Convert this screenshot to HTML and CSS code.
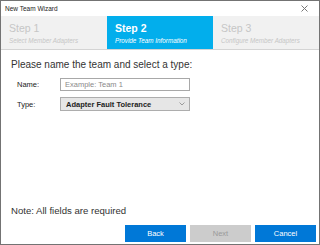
FILE: index.html
```html
<!DOCTYPE html>
<html lang="en">
<head>
    <meta charset="UTF-8">
    <meta name="viewport" content="width=device-width, initial-scale=1.0">
    <title>New Team Wizard</title>
    <link rel="stylesheet" href="styles.css">
</head>
<body>
    <div class="window">
        <div class="titlebar">
            <span class="title">New Team Wizard</span>
            <svg class="close" width="7" height="7" viewBox="0 0 7 7">
                <path d="M0.5 0.5 L6.5 6.5 M6.5 0.5 L0.5 6.5" stroke="#777" stroke-width="1" fill="none"/>
            </svg>
        </div>

        <div class="steps">
            <div class="step">
                <div class="step-name">Step 1</div>
                <div class="step-desc">Select Member Adapters</div>
            </div>
            <div class="step active">
                <div class="step-name">Step 2</div>
                <div class="step-desc">Provide Team Information</div>
            </div>
            <div class="step">
                <div class="step-name">Step 3</div>
                <div class="step-desc">Configure Member Adapters</div>
            </div>
        </div>

        <div class="content">
            <p class="heading">Please name the team and select a type:</p>
            <div class="form">
                <label for="team-name">Name:</label>
                <input type="text" id="team-name" class="input-field" placeholder="Example: Team 1">

                <label for="team-type">Type:</label>
                <div class="select">
                    <span>Adapter Fault Tolerance</span>
                    <svg width="6" height="4" viewBox="0 0 6 4">
                        <path d="M0.5 0.5 L3 3 L5.5 0.5" stroke="#888" stroke-width="0.8" fill="none"/>
                    </svg>
                </div>
            </div>

            <p class="note">Note: All fields are required</p>
        </div>

        <div class="footer">
            <button class="button">Back</button>
            <button class="button disabled">Next</button>
            <button class="button">Cancel</button>
        </div>
    </div>
</body>
</html>
```

FILE: styles.css
```css
* {
    box-sizing: border-box;
}
body {
    margin: 0;
    font-family: "Liberation Sans", Arial, sans-serif;
    background-color: white;
}
.window {
    width: 320px;
    height: 245px;
    border: 1px solid #737373;
    display: flex;
    flex-direction: column;
    background-color: white;
}
.titlebar {
    height: 15px;
    display: flex;
    align-items: center;
    justify-content: space-between;
    padding: 0 11px 0 4px;
}
.title {
    font-size: 6.5px;
    color: #222;
}
.steps {
    height: 34px;
    display: grid;
    grid-template-columns: 106px 106px 106px;
    background-color: #f1f1f1;
    border-bottom: 1px solid #d4d4d4;
}
.step {
    padding: 6px 0 0 8px;
    color: #c6c6c6;
}
.step.active {
    background-color: #02aeec;
    color: white;
}
.step-name {
    font-size: 10.5px;
    line-height: 12px;
}
.step.active .step-name {
    font-weight: bold;
}
.step-desc {
    font-size: 6.3px;
    font-style: italic;
    margin-top: 3px;
}
.content {
    flex: 1;
    display: flex;
    flex-direction: column;
    padding: 9px 10px 0 10px;
}
.heading {
    margin: 0;
    font-size: 10px;
    line-height: 12px;
    color: #333;
}
.form {
    display: grid;
    grid-template-columns: 43px 130px;
    row-gap: 6px;
    align-items: center;
    margin: 7px 0 0 6px;
}
.form label {
    font-size: 7.5px;
    color: #222;
}
.input-field {
    height: 13px;
    border: 1px solid #a8a8a8;
    padding: 0 4px;
    font-family: "Liberation Sans", Arial, sans-serif;
    font-size: 7.5px;
    outline: none;
}
.input-field::placeholder {
    color: #8a8a8a;
}
.select {
    height: 14px;
    border: 1px solid #adadad;
    background-color: #e6e6e6;
    display: flex;
    align-items: center;
    justify-content: space-between;
    padding: 0 4px 0 5px;
    font-size: 7.5px;
    font-weight: bold;
    color: #222;
}
.note {
    margin: auto 0 0 0;
    font-size: 9.6px;
    line-height: 12px;
    color: #333;
}
.footer {
    display: flex;
    justify-content: flex-end;
    gap: 4px;
    padding: 8px 3px 2px 0;
}
.button {
    width: 61px;
    height: 17px;
    border: none;
    background-color: #0078d7;
    color: white;
    font-family: "Liberation Sans", Arial, sans-serif;
    font-size: 7.5px;
    cursor: pointer;
}
.button.disabled {
    background-color: #cccccc;
    color: #9a9a9a;
    cursor: default;
}
```
